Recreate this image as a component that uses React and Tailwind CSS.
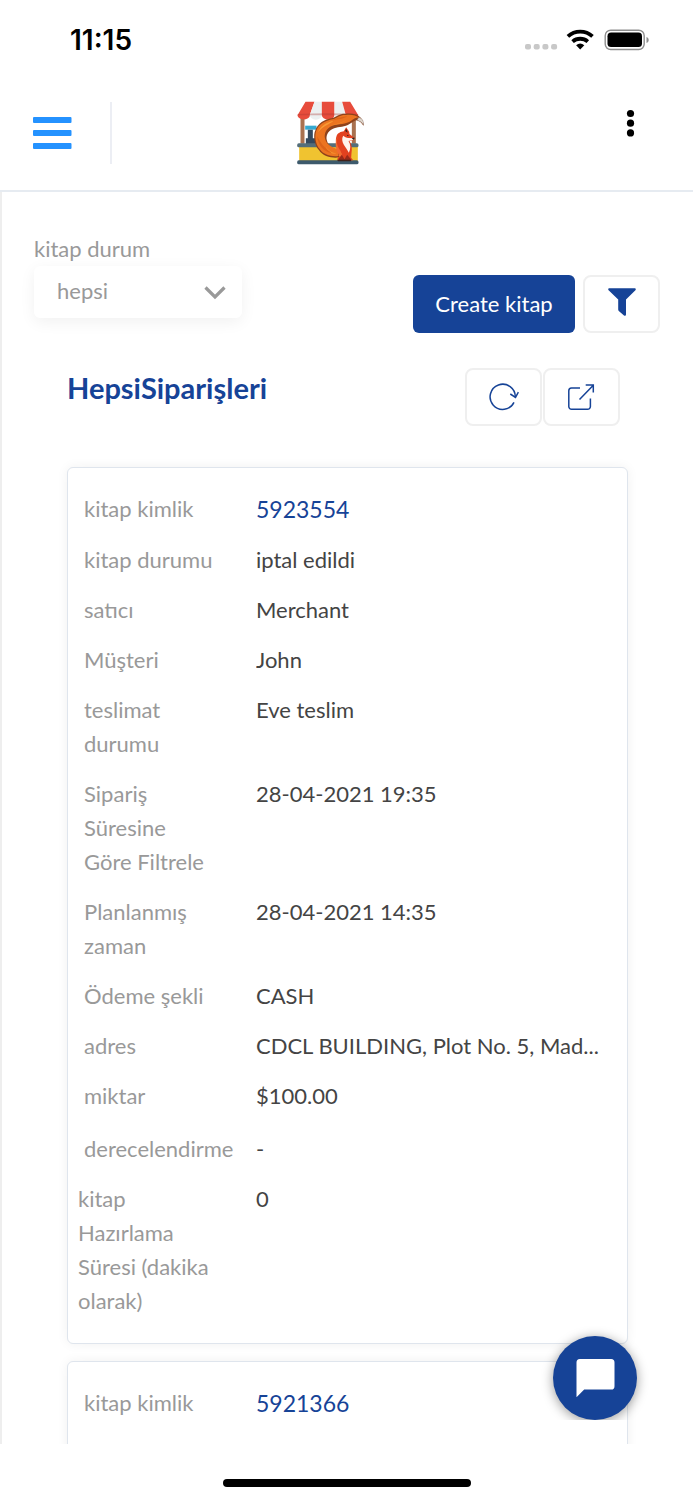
import React from "react";

const orders = [
  {
    id: "5923554",
    rows: [
      { label: "kitap durumu", value: "iptal edildi" },
      { label: "satıcı", value: "Merchant" },
      { label: "Müşteri", value: "John" },
      { label: "teslimat durumu", value: "Eve teslim" },
      { label: "Sipariş Süresine Göre Filtrele", value: "28-04-2021 19:35" },
      { label: "Planlanmış zaman", value: "28-04-2021 14:35" },
      { label: "Ödeme şekli", value: "CASH" },
      { label: "adres", value: "CDCL BUILDING, Plot No. 5, Mad..." },
      { label: "miktar", value: "$100.00" },
      { label: "derecelendirme", value: "-", rating: true },
      { label: "kitap Hazırlama Süresi (dakika olarak)", value: "0", wide: true },
    ],
  },
  { id: "5921366", rows: [] },
];

function StatusBar() {
  return (
    <div className="flex h-20 shrink-0 items-center justify-between pl-[70px] pr-11">
      <span className="font-['Inter',sans-serif] text-[28px] font-semibold leading-8 text-black">11:15</span>
      <svg width="125" height="24" viewBox="0 0 125 24" aria-hidden="true">
        <g fill="#c8c8c8">
          <rect x="1" y="16" width="6" height="5.500" rx="2" />
          <rect x="9.7" y="16" width="6" height="5.500" rx="2" />
          <rect x="18.4" y="16" width="6" height="5.500" rx="2" />
          <rect x="27.1" y="16" width="6" height="5.500" rx="2" />
        </g>
        <g fill="none" stroke="#000" strokeWidth="3.800">
          <path d="M43.900 8.400a18.300 18.300 0 0 1 24.600 0" />
          <path d="M48.600 13.600a11.600 11.600 0 0 1 15.200 0" />
        </g>
        <path d="M52.100 17.200a6.300 6.300 0 0 1 8.200 0L56.200 21.500z" fill="#000" />
        <rect x="81.200" y="2.200" width="39" height="19.300" rx="5.500" fill="none" stroke="#8e8e8e" strokeWidth="1.400" />
        <rect x="83.500" y="4.600" width="34.500" height="14.500" rx="3.600" fill="#000" />
        <path d="M122.500 9v6c1.600-.6 2.200-1.800 2.200-3s-.6-2.400-2.200-3z" fill="#8e8e8e" />
      </svg>
    </div>
  );
}

function Logo() {
  return (
    <svg width="69" height="64" viewBox="50 46 204 192" role="img" aria-label="Fox market">
      <path d="M62 90h12v84H62zM216 90h12v84h-12z" fill="#a9714f" />
      <path d="M76 120h34v12H76z" fill="#35a9d0" />
      <path d="M84 132h15v26h12v18H78v-18h6z" fill="#34495e" />
      <path d="M58 180h176v48H58z" fill="#f0c330" />
      <rect x="52" y="173" width="184" height="12" rx="5" fill="#546e7a" />
      <rect x="52" y="224" width="184" height="12" rx="5" fill="#3d5a6c" />
      <path d="M77 48h27L90 87v4c-4 14-35 14-37-2z" fill="#e74c3c" />
      <path d="M104 48h22v40a18 14 0 0 1-36 0z" fill="#ecf0f1" />
      <path d="M126 48h38v40a19 14 0 0 1-38 0z" fill="#e74c3c" />
      <path d="M164 48h23l11 40a17 14 0 0 1-34 0z" fill="#ecf0f1" />
      <path d="M187 48h24l24 40c1 16-35 18-37 0z" fill="#e74c3c" />
      <path d="M53 85q90-5 182 0v4H53z" fill="#a93630" opacity=".35" />
      <path
        d="M178 215c-18 3-48-1-61-22-14-16-17-45-11-58 8-22 27-34 51-38 16-5 22-14 41-13 20-2 36 2 43 11 7 7 11 16 10 26-5-9-12-16-22-17-8 2-14 9-25 14-15 7-33 5-46 12-15 8-20 21-17 34 4 16 15 25 37 31z"
        fill="#8f421b"
      />
      <path
        d="M176 211c-18 3-44-2-56-20-14-16-16-42-11-55 8-21 27-31 50-35 15-5 22-14 39-13 18-2 30 1 40 8-11-1-16 4-24 9-15 11-38 9-56 15-20 8-26 24-22 40 4 15 17 25 40 31z"
        fill="#ec7420"
      />
      <path d="M114 140c8-18 24-30 47-35-14 12-30 15-47 35M133 130c18-14 42-13 67-28-20 17-45 11-67 28M138 183c8 13 19 18 32 20-14 3-27-3-32-20" fill="#f79a34" />
      <path d="M112 152c3 29 20 46 44 51-16-14-30-22-44-51M158 104c15-10 31-9 45-13-15 11-29 9-45 13" fill="#dc6318" />
      <path d="M237 95c11 3 15 13 14 23-6-9-11-12-20-14z" fill="#ddd6cc" stroke="#795548" strokeWidth="1" />
      <path d="M199 125l9 13 1 7 15 12-3 7-12 2c8 12 8 24 6 36l-1 14 6 8h-46l-1-6 12-14c-16-13-20-39-15-52 3-10 13-14 22-15z" fill="#e2411f" />
      <path d="M190 150c4 3 9 6 16 7l16 1-2 5-14 3c7 11 7 24 1 35-4-9-10-15-15-24-5-9-7-18-2-27" fill="#fff3ec" />
      <path d="M175 152c-8 15-3 30 7 43l5 14-5 4c-16-17-19-47-7-61" fill="#f26a31" />
      <path d="M196 136l3-7 5 12zM219 156h6l-3 6-6-3zM202 147l6 4h-6z" fill="#29211e" />
      <path d="M177 219l9-12 8 14 8-14 10 12 3 7h-38z" fill="#982a19" />
      <path d="M171 222h42v5h-38z" fill="#402019" />
    </svg>
  );
}

function Header() {
  return (
    <header className="flex h-28 shrink-0 items-center justify-between border-b-2 border-[#e6ebf1] pb-1 pl-8 pr-12">
      <div className="flex items-center">
        <button type="button" aria-label="Menu" className="w-[78px] cursor-pointer">
          <svg width="40" height="34" viewBox="0 0 40 34" fill="#2492ff" aria-hidden="true">
            <rect x="1" y="1" width="38.500" height="6" rx="1" />
            <rect x="1" y="14" width="38.500" height="6" rx="1" />
            <rect x="1" y="27" width="38.500" height="6" rx="1" />
          </svg>
        </button>
        <div className="h-[62px] w-0.5 bg-[#eceef4]" />
      </div>
      <div className="mr-[68px]">
        <Logo />
      </div>
      <button type="button" aria-label="More options" className="mb-5 w-7 cursor-pointer">
        <svg width="28" height="28" viewBox="0 0 28 28" aria-hidden="true">
          <circle cx="13.500" cy="4.500" r="3.600" />
          <circle cx="13.500" cy="14.200" r="3.600" />
          <circle cx="13.500" cy="23.900" r="3.600" />
        </svg>
      </button>
    </header>
  );
}

function IconButton({ label, children }) {
  return (
    <button
      type="button"
      aria-label={label}
      className="flex h-[58px] w-[77px] cursor-pointer items-center justify-center rounded-lg border-2 border-[#efefef] bg-white text-[#164397]"
    >
      {children}
    </button>
  );
}

function Row({ row }) {
  return (
    <div className={row.rating ? "flex pb-2 pt-[11px]" : "flex py-2"}>
      <dt
        className={
          row.wide
            ? "-ml-1.5 mr-1.5 w-[156px] shrink-0 pr-[23px] text-[#999]"
            : "w-[156px] shrink-0 pr-[23px] text-[#999]"
        }
      >
        {row.label}
      </dt>
      <dd className="ml-4 min-w-0 truncate text-[#444]">{row.value}</dd>
    </div>
  );
}

function OrderCard({ order }) {
  return (
    <article className="min-h-40 rounded-md border border-[#dfe5ed] bg-white px-4 pb-[17px] pt-4 shadow-[0_0_12px_rgba(0,0,0,0.06)]">
      <dl>
        <div className="flex py-2">
          <dt className="w-[156px] shrink-0 text-[#999]">kitap kimlik</dt>
          <dd className="ml-4">
            <a href="#order" className="text-[23px] text-[#164397]">
              {order.id}
            </a>
          </dd>
        </div>
        {order.rows.map((row) => (
          <Row key={row.label} row={row} />
        ))}
      </dl>
    </article>
  );
}

export default function App() {
  return (
    <div className="relative flex h-screen flex-col overflow-hidden bg-white font-['Lato',sans-serif] text-[22px] leading-[34px]">
      <StatusBar />
      <Header />
      <main className="min-h-0 flex-1 overflow-y-auto border-l-2 border-[#eee] [scrollbar-width:none]">
        <div className="flex items-end justify-between pl-8 pr-[33px] pt-10">
          <div className="w-[208px]">
            <label htmlFor="status" className="block text-[#999]">
              kitap durum
            </label>
            <div className="relative mb-[15px]">
              <select
                id="status"
                className="h-[52px] w-full appearance-none rounded-md bg-white pb-0.5 pl-[23px] pr-12 text-[#999] shadow-[0_4px_16px_rgba(0,0,0,0.06)]"
              >
                <option>hepsi</option>
              </select>
              <svg
                className="pointer-events-none absolute right-4 top-5"
                width="22"
                height="14"
                viewBox="0 0 22 14"
                fill="none"
                stroke="#999"
                strokeWidth="3.200"
                aria-hidden="true"
              >
                <path d="M1.500 1.500l9.500 9.500 9.500-9.500" />
              </svg>
            </div>
          </div>
          <div className="flex gap-2">
            <button type="button" className="h-[58px] w-[162px] cursor-pointer whitespace-nowrap rounded-md bg-[#164397] text-white">
              Create kitap
            </button>
            <IconButton label="Filter">
              <svg className="mb-1" width="28" height="28" viewBox="0 0 28 28" fill="currentColor" aria-hidden="true">
                <path d="M1.300.3h25.400c1 0 1.400 1.300.7 2L18 11.400v15c0 1.200-1.200 1.700-2 1l-5.200-4.500c-.5-.4-.6-.8-.6-1.400V11.400L.6 2.300C-.1 1.600.3.3 1.300.3z" />
              </svg>
            </IconButton>
          </div>
        </div>

        <section className="px-[65px] pb-12 pt-[35px]">
          <div className="mb-[41px] flex items-start justify-between pr-2">
            <h1 className="pt-1 text-[29px] font-bold leading-8 text-[#164397]">HepsiSiparişleri</h1>
            <div className="flex gap-px">
              <IconButton label="Refresh">
                <svg width="30" height="28" viewBox="0 0 30 28" fill="none" stroke="currentColor" strokeWidth="1.500" aria-hidden="true">
                  <path d="M25 19.400A12.600 12.600 0 1 1 26.300 14.300" />
                  <path d="M21.300 11l5.200 3.400 2.900-5.300" />
                </svg>
              </IconButton>
              <IconButton label="Export">
                <svg width="28" height="28" viewBox="0 0 28 28" fill="none" stroke="currentColor" strokeWidth="1.500" aria-hidden="true">
                  <path d="M12 5H3.500A2.800 2.800 0 0 0 .8 7.800v15.700a2.800 2.800 0 0 0 2.800 2.800h16a2.800 2.800 0 0 0 2.800-2.800V15.500" />
                  <path d="M11.500 16.500L25.300 2.200M17.700 2h7.600v7.500" />
                </svg>
              </IconButton>
            </div>
          </div>
          <div className="flex flex-col gap-[17px]">
            {orders.map((order) => (
              <OrderCard key={order.id} order={order} />
            ))}
          </div>
        </section>
      </main>

      <div className="absolute bottom-20 right-9 overflow-hidden px-5 pt-5">
        <button
          type="button"
          aria-label="Chat"
          className="flex size-[84px] cursor-pointer items-center justify-center rounded-full bg-[#164397] shadow-[0_2px_12px_rgba(0,0,0,0.4)]"
        >
          <svg width="40" height="40" viewBox="0 0 40 40" fill="#fff" aria-hidden="true">
            <path d="M4.800 1h31.400a3.400 3.400 0 0 1 3.300 3.400v23.800a3.400 3.400 0 0 1-3.300 3.400H9.200L1.500 39.300V4.400A3.400 3.400 0 0 1 4.800 1z" />
          </svg>
        </button>
      </div>

      <footer className="flex h-14 shrink-0 items-end justify-center pb-[13px]">
        <div className="h-2 w-[248px] rounded-full bg-black" />
      </footer>
    </div>
  );
}
